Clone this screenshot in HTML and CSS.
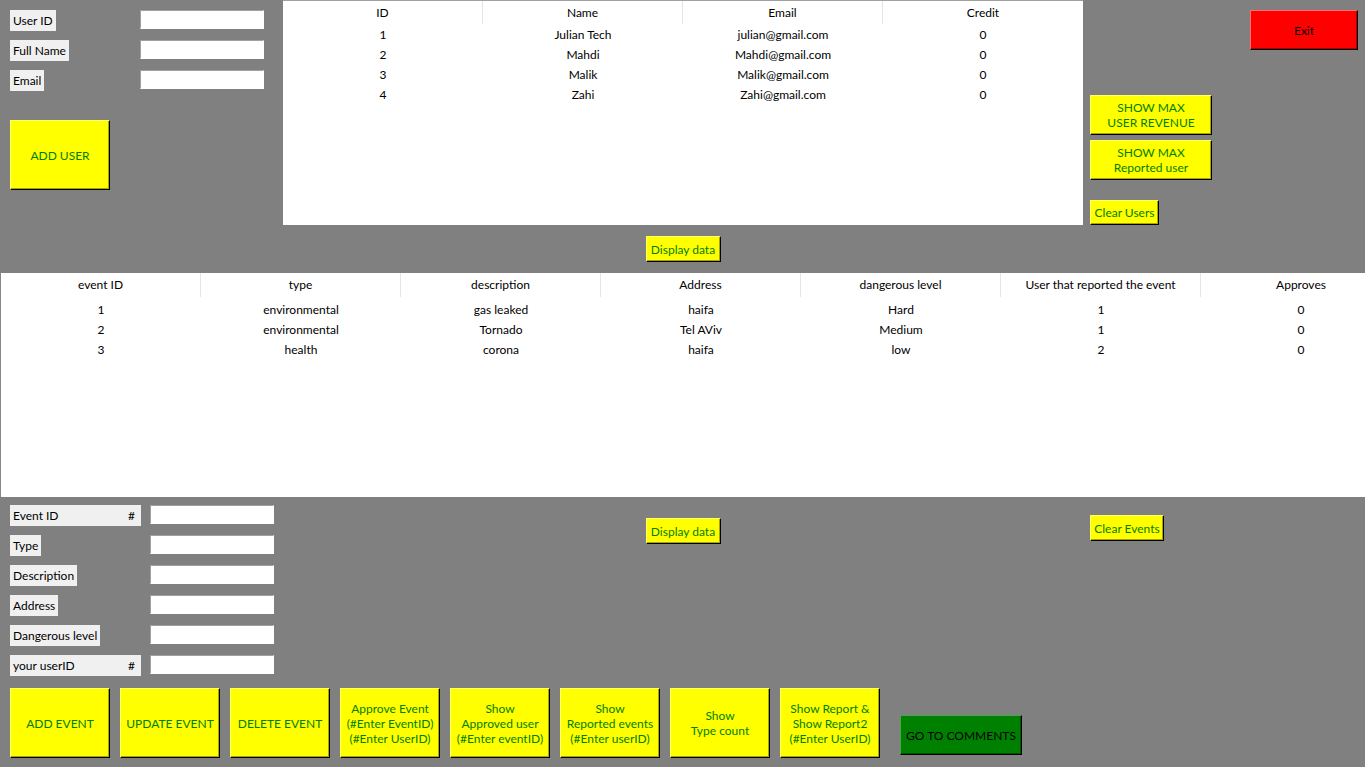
FILE: index.html
```html
<!DOCTYPE html>
<html>
<head>
<meta charset="utf-8">
<title>Events</title>
<link rel="stylesheet" href="styles.css">
</head>
<body>
<div class="app">
  <section class="top">
    <div class="col-left">
      <div class="form user-form">
        <span class="lbl">User ID</span><input class="entry" type="text">
        <span class="lbl">Full Name</span><input class="entry" type="text">
        <span class="lbl">Email</span><input class="entry" type="text">
      </div>
      <button class="btn btn-big add-user">ADD USER</button>
    </div>
    <div class="col-mid">
      <div class="table users">
        <div class="thead cols4">
          <span>ID</span><span>Name</span><span>Email</span><span>Credit</span>
        </div>
        <div class="tbody">
          <div class="tr cols4"><span>1</span><span>Julian Tech</span><span>julian@gmail.com</span><span>0</span></div>
          <div class="tr cols4"><span>2</span><span>Mahdi</span><span>Mahdi@gmail.com</span><span>0</span></div>
          <div class="tr cols4"><span>3</span><span>Malik</span><span>Malik@gmail.com</span><span>0</span></div>
          <div class="tr cols4"><span>4</span><span>Zahi</span><span>Zahi@gmail.com</span><span>0</span></div>
        </div>
      </div>
      <button class="btn btn-small display-top">Display data</button>
    </div>
    <div class="col-right">
      <button class="btn btn-exit">Exit</button>
      <button class="btn btn-max max1">SHOW MAX<br>USER REVENUE</button>
      <button class="btn btn-max max2">SHOW MAX<br>Reported user</button>
      <button class="btn btn-small clear-users">Clear Users</button>
    </div>
  </section>

  <section class="table events">
    <div class="thead cols7">
      <span>event ID</span><span>type</span><span>description</span><span>Address</span><span>dangerous level</span><span>User that reported the event</span><span>Approves</span>
    </div>
    <div class="tbody">
      <div class="tr cols7"><span>1</span><span>environmental</span><span>gas leaked</span><span>haifa</span><span>Hard</span><span>1</span><span>0</span></div>
      <div class="tr cols7"><span>2</span><span>environmental</span><span>Tornado</span><span>Tel AViv</span><span>Medium</span><span>1</span><span>0</span></div>
      <div class="tr cols7"><span>3</span><span>health</span><span>corona</span><span>haifa</span><span>low</span><span>2</span><span>0</span></div>
    </div>
  </section>

  <section class="bottom">
    <div class="bottom-upper">
      <div class="col-left">
        <div class="form event-form">
          <span class="lbl lbl-wide"><span>Event ID</span><span>#</span></span><input class="entry" type="text">
          <span class="lbl">Type</span><input class="entry" type="text">
          <span class="lbl">Description</span><input class="entry" type="text">
          <span class="lbl">Address</span><input class="entry" type="text">
          <span class="lbl">Dangerous level</span><input class="entry" type="text">
          <span class="lbl lbl-wide"><span>your userID</span><span>#</span></span><input class="entry" type="text">
        </div>
      </div>
      <div class="col-mid">
        <button class="btn btn-small display-bottom">Display data</button>
      </div>
      <div class="col-right">
        <button class="btn btn-small clear-events">Clear Events</button>
      </div>
    </div>
    <div class="actions">
      <button class="btn btn-big">ADD EVENT</button>
      <button class="btn btn-big">UPDATE EVENT</button>
      <button class="btn btn-big">DELETE EVENT</button>
      <button class="btn btn-big">Approve Event<br>(#Enter EventID)<br>(#Enter UserID)</button>
      <button class="btn btn-big">Show<br>Approved user<br>(#Enter eventID)</button>
      <button class="btn btn-big">Show<br>Reported events<br>(#Enter userID)</button>
      <button class="btn btn-big">Show<br>Type count</button>
      <button class="btn btn-big">Show Report &amp;<br>Show Report2<br>(#Enter UserID)</button>
      <button class="btn btn-comments">GO TO COMMENTS</button>
    </div>
  </section>
</div>
</body>
</html>
```

FILE: styles.css
```css
* { box-sizing: border-box; }

html, body {
  margin: 0;
  padding: 0;
  background: #808080;
}

body {
  font-family: "Lato", "Liberation Sans", sans-serif;
  font-size: 12px;
  color: #000;
}

.app {
  width: 1365px;
  height: 767px;
  overflow: hidden;
  background: #808080;
}

/* ---------- generic widgets ---------- */
.btn {
  font-family: inherit;
  font-size: 12px;
  line-height: 15px;
  padding: 0;
  margin: 0;
  background: #ffff00;
  color: #008000;
  border: 1px solid;
  border-color: #ffff66 #000 #000 #ffff66;
  box-shadow: inset -1px -1px 0 #a6a600;
  text-align: center;
  white-space: nowrap;
  cursor: pointer;
}

.btn-big { width: 100px; height: 70px; }
.btn-small { height: 26px; padding: 0; }
.btn-max { width: 122px; height: 40px; }

.btn-exit {
  width: 108px;
  height: 40px;
  background: #ff0000;
  color: #000;
  border-color: #ff6a6a #000 #000 #ff6a6a;
  box-shadow: inset -1px -1px 0 #a60000;
}

.btn-comments {
  width: 122px;
  height: 40px;
  background: #008000;
  color: #000;
  border-color: #4da64d #000 #000 #4da64d;
  box-shadow: inset -1px -1px 0 #005500;
}

.lbl {
  height: 21px;
  line-height: 21px;
  padding: 0 3px;
  background: #f0f0f0;
  justify-self: start;
  white-space: nowrap;
}

.lbl-wide {
  width: 131px;
  display: flex;
  justify-content: space-between;
  padding-right: 6px;
}

.entry {
  width: 124px;
  height: 19px;
  margin: 0;
  padding: 0 2px;
  background: #fff;
  border: 1px solid;
  border-color: #a0a0a0 #fff #fff #a0a0a0;
  font-family: inherit;
  font-size: 12px;
}

.form {
  display: grid;
  row-gap: 9px;
  align-items: start;
}

/* ---------- top section ---------- */
.top,
.bottom-upper {
  display: grid;
  grid-template-columns: 283px 800px 282px;
}

.top { height: 273px; }

.col-left { display: flex; flex-direction: column; align-items: flex-start; }
.col-mid { display: flex; flex-direction: column; align-items: center; }
.col-right { display: flex; flex-direction: column; align-items: flex-start; padding-left: 7px; }

.top .col-left { padding: 10px 0 0 10px; }
.user-form { grid-template-columns: 130px 124px; }
.add-user { margin-top: 29px; }

.display-top { margin-top: 11px; width: 75px; }

.btn-exit { align-self: flex-end; margin: 10px 7px 0 0; }
.max1 { margin-top: 45px; }
.max2 { margin-top: 5px; }
.clear-users { margin-top: 20px; height: 25px; width: 69px; }

/* ---------- tables ---------- */
.table { background: #fff; }

.users {
  width: 800px;
  height: 225px;
  border-top: 1px solid #a0a0a0;
}

.events {
  width: 1365px;
  height: 224px;
  border-left: 1px solid #828790;
}

.thead, .tr { display: grid; }
.cols4 { grid-template-columns: repeat(4, 200px); }
.cols7 { grid-template-columns: repeat(7, 200px); }

.thead { height: 24px; align-items: start; }
.events .thead { height: 25px; }
.events .tbody { padding-top: 2px; }

.thead span {
  text-align: center;
  line-height: 23px;
  height: 23px;
  border-right: 1px solid #e5e5e5;
}
.events .thead span { height: 24px; line-height: 24px; }
.thead span:last-child { border-right: none; }

.tr { height: 20px; align-items: center; }
.tr span { text-align: center; line-height: 20px; }

/* ---------- bottom section ---------- */
.bottom { height: 270px; }

.bottom .col-left { padding: 8px 0 0 10px; }
.event-form { grid-template-columns: 140px 124px; }

.display-bottom { margin-top: 21px; width: 75px; }
.clear-events { margin-top: 18px; width: 74px; }

.actions {
  display: flex;
  align-items: flex-start;
  gap: 10px;
  padding: 12px 0 0 10px;
}

.btn-comments { margin: 27px 0 0 10px; }
```
